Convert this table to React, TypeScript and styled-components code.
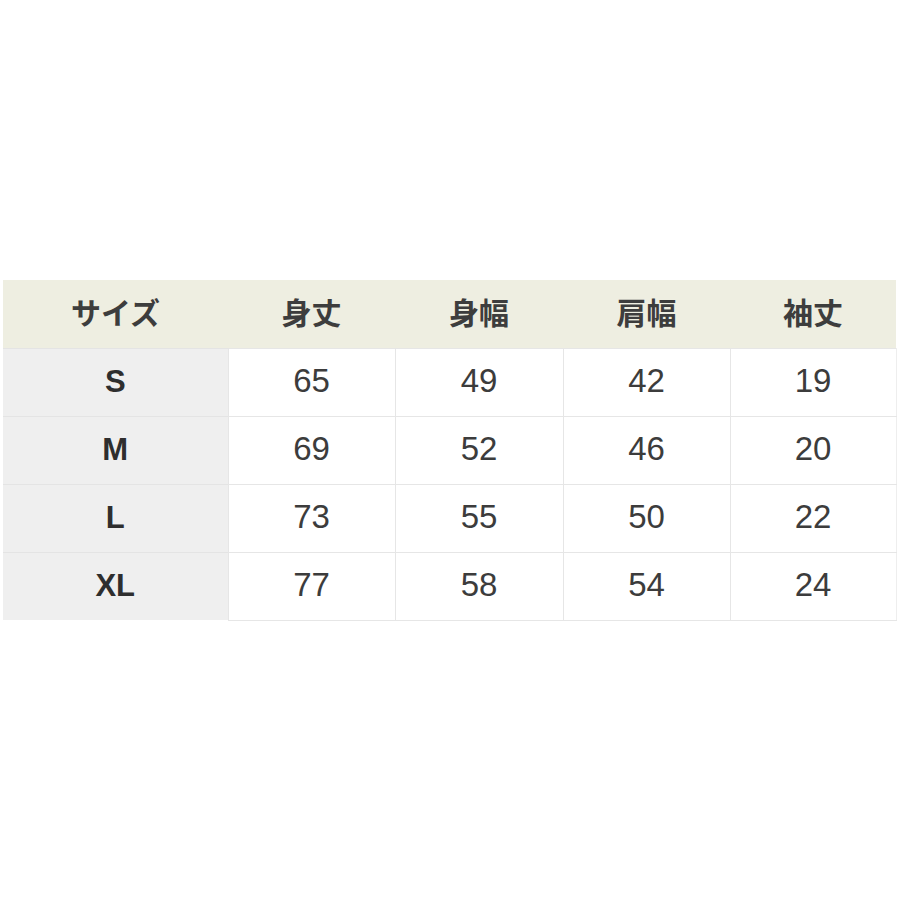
import styled, { createGlobalStyle } from 'styled-components'

const GlobalStyle = createGlobalStyle`
  html, body {
    margin: 0;
    padding: 0;
    background: #ffffff;
  }
`

const Page = styled.div`
  width: 900px;
  height: 900px;
  padding-top: 280px;
  padding-left: 3px;
  box-sizing: border-box;
`

const SizeTable = styled.table`
  border-collapse: collapse;
  table-layout: fixed;
  width: 893px;
  font-family: "Liberation Sans", "Noto Sans CJK JP", sans-serif;
  color: #333333;
`

const HeadRow = styled.tr`
  background: #eeeee1;
  height: 68px;
`

const HeadCell = styled.th`
  font-family: "Noto Sans CJK JP", sans-serif;
  font-size: 30px;
  font-weight: 700;
  text-align: center;
  padding: 0 0 6px 0;
  color: #3d3d3d;
`

const BodyRow = styled.tr`
  height: 68px;
`

const LabelCell = styled.td`
  background: #efefef;
  border-top: 1px solid #e4e4e4;
  font-size: 31px;
  font-weight: 700;
  text-align: center;
  padding: 0;
  color: #2e2e2e;
`

const ValueCell = styled.td`
  background: #ffffff;
  border: 1px solid #e6e6e6;
  font-size: 33px;
  text-align: center;
  padding: 0 0 2px 0;
  color: #3c3c3c;
  &:last-child {
    border-right: 1px solid #eeeeee;
  }
`

const columns = ['サイズ', '身丈', '身幅', '肩幅', '袖丈']
const widths = [225, 167, 168, 167, 166]

const rows = [
  { size: 'S', values: [65, 49, 42, 19] },
  { size: 'M', values: [69, 52, 46, 20] },
  { size: 'L', values: [73, 55, 50, 22] },
  { size: 'XL', values: [77, 58, 54, 24] },
]

export default function App() {
  return (
    <>
      <GlobalStyle />
      <Page>
        <SizeTable>
          <colgroup>
            {widths.map((w, i) => (
              <col key={i} style={{ width: w }} />
            ))}
          </colgroup>
          <thead>
            <HeadRow>
              {columns.map(c => (
                <HeadCell key={c}>{c}</HeadCell>
              ))}
            </HeadRow>
          </thead>
          <tbody>
            {rows.map(r => (
              <BodyRow key={r.size}>
                <LabelCell>{r.size}</LabelCell>
                {r.values.map((v, i) => (
                  <ValueCell key={i}>{v}</ValueCell>
                ))}
              </BodyRow>
            ))}
          </tbody>
        </SizeTable>
      </Page>
    </>
  )
}
